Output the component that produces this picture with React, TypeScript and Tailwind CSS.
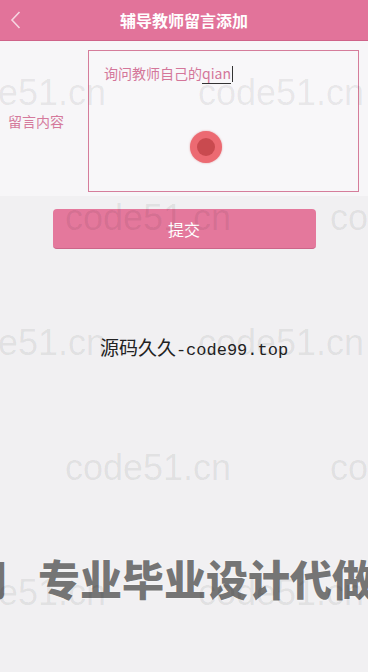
const cjk = "font-['Noto_Sans_CJK_SC',sans-serif]";

const marks = [
  { left: "left-[-60px]", top: "top-[75px]" },
  { left: "left-[198px]", top: "top-[75px]" },
  { left: "left-[65px]", top: "top-[200px]" },
  { left: "left-[330px]", top: "top-[200px]" },
  { left: "left-[-60px]", top: "top-[325px]" },
  { left: "left-[198px]", top: "top-[325px]" },
  { left: "left-[65px]", top: "top-[450px]" },
  { left: "left-[330px]", top: "top-[450px]" },
  { left: "left-[-60px]", top: "top-[575px]" },
  { left: "left-[198px]", top: "top-[575px]" },
];

function Watermarks() {
  return (
    <div className="pointer-events-none absolute inset-0">
      {marks.map((m, i) => (
        <span
          key={i}
          className={`absolute ${m.left} ${m.top} whitespace-nowrap font-['Liberation_Sans',sans-serif] text-[36px] leading-none text-black/[0.07]`}
        >
          code51.cn
        </span>
      ))}
    </div>
  );
}

export default function App() {
  return (
    <div className={`relative h-[672px] w-full overflow-hidden bg-[#f1f0f2] ${cjk}`}>
      {/* header */}
      <div className="relative flex h-[41px] items-center justify-center border-b border-[#cf6389] bg-[#e2739a]">
        <svg
          className="absolute left-[10px] top-[11px]"
          width="11"
          height="18"
          viewBox="0 0 11 18"
          fill="none"
          stroke="rgba(255,255,255,0.7)"
          strokeWidth="1.6"
        >
          <polyline points="9.5,1 2,9 9.5,17" />
        </svg>
        <h1 className="text-[16px] font-bold text-white">辅导教师留言添加</h1>
      </div>

      {/* form */}
      <div className="flex h-[155px] items-center bg-[#f7f6f8] pb-[4px] pt-[9px]">
        <label className="w-[88px] pl-[8px] text-[14px] text-[#d57a9c]">留言内容</label>
        <div className="relative h-[142px] w-[271px] border border-[#d57d9b] bg-[#f8f7f9] pl-[15px] pt-[12px]">
          <p className="text-[14px] leading-[20px] text-[#d4769a]">
            询问教师自己的
            <span className="border-b border-[#333] text-[#d4769a]">qian</span>
            <span className="ml-[1px] inline-block h-[16px] w-px translate-y-[3px] bg-[#333]" />
          </p>
          <div className="absolute left-[101px] top-[80px] flex h-[32px] w-[32px] items-center justify-center rounded-full bg-[#ec6a72] shadow-[0_0_2px_rgba(200,60,70,0.5)]">
            <div className="h-[18px] w-[18px] rounded-full bg-[#c94a4f]" />
          </div>
        </div>
      </div>

      {/* submit */}
      <div className="mt-[13px] flex justify-center">
        <button className="h-[40px] w-[263px] rounded-[4px] border-b border-[#cc6589] bg-[#e4789c] text-[16px] text-white">
          提交
        </button>
      </div>

      <p className="mt-[85px] pl-[20px] text-center text-[17px] leading-[26px] text-[#222] font-['Liberation_Mono','Noto_Sans_CJK_SC',monospace]">
        <span className={`${cjk} text-[19px]`}>源码久久</span>-code99.top
      </p>

      <div className="mt-[189px] flex h-[50px] items-center whitespace-nowrap">
        <span className="-ml-[35px] text-[42px] font-black leading-none text-[#757575]">网</span>
        <span className="ml-[31px] text-[42px] font-black leading-none text-[#757575] [text-shadow:0_0_2px_#fff]">
          专业毕业设计代做
        </span>
      </div>

      <Watermarks />
    </div>
  );
}
